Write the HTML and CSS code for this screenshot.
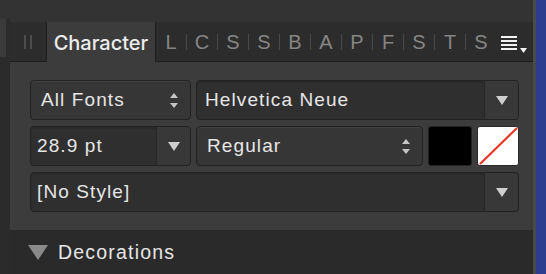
FILE: index.html
```html
<!DOCTYPE html>
<html>
	<head>
		<meta charset="utf-8" />
		<title>Character</title>
		<link rel="stylesheet" href="styles.css">
	</head>
	<body>
		<div class="window">
			<div class="left-strip">
				<div class="strip-top"></div>
				<div class="strip-grip"><span></span></div>
			</div>

			<div class="panel">
				<div class="header"></div>

				<div class="tabbar">
					<div class="grip"><span></span><span></span></div>
					<div class="tab active">Character</div>
					<div class="letters">
						<span class="letter">L</span>
						<span class="letter">C</span>
						<span class="letter">S</span>
						<span class="letter">S</span>
						<span class="letter">B</span>
						<span class="letter">A</span>
						<span class="letter">P</span>
						<span class="letter">F</span>
						<span class="letter">S</span>
						<span class="letter">T</span>
						<span class="letter">S</span>
					</div>
					<div class="menu">
						<svg width="28" height="20" viewBox="0 0 28 20">
							<rect x="0" y="2" width="16" height="2" fill="#f2f2f2" />
							<rect x="0" y="6" width="16" height="2" fill="#f2f2f2" />
							<rect x="0" y="10" width="16" height="2" fill="#f2f2f2" />
							<rect x="0" y="14" width="16" height="2" fill="#f2f2f2" />
							<polygon points="19,14 26,14 22.5,19" fill="#f2f2f2" />
						</svg>
					</div>
				</div>

				<div class="content">
					<div class="row">
						<div class="popup fonts">
							<span class="label">All Fonts</span>
							<span class="stepper"><i class="up"></i><i class="down"></i></span>
						</div>
						<div class="combo family">
							<span class="field">Helvetica Neue</span>
							<span class="drop"><i class="tri"></i></span>
						</div>
					</div>

					<div class="row">
						<div class="combo size">
							<span class="field">28.9 pt</span>
							<span class="drop"><i class="tri"></i></span>
						</div>
						<div class="popup weight">
							<span class="label">Regular</span>
							<span class="stepper"><i class="up"></i><i class="down"></i></span>
						</div>
						<div class="swatch fill"></div>
						<div class="swatch stroke">
							<svg width="40" height="38" viewBox="0 0 40 38" preserveAspectRatio="none">
								<line x1="2" y1="37" x2="39" y2="1" stroke="#e8352b" stroke-width="2.2" />
							</svg>
						</div>
					</div>

					<div class="row">
						<div class="combo style">
							<span class="field">[No Style]</span>
							<span class="drop"><i class="tri"></i></span>
						</div>
					</div>
				</div>

				<div class="section">
					<i class="disclosure"></i>
					<span>Decorations</span>
				</div>
			</div>

			<div class="edge"></div>
			<div class="desktop"></div>
		</div>
	</body>
</html>
```

FILE: styles.css
```css
body {
	margin: 0;
	padding: 0;
	background-color: #333333;
	font-family: "Liberation Sans", Arial, sans-serif;
	overflow: hidden;
}

.window {
	display: flex;
	width: 546px;
	height: 274px;
}

/* 左边的窄条 */
.left-strip {
	width: 10px;
	display: flex;
	flex-direction: column;
	background-color: #2b2b2b;
}

.strip-top {
	height: 19px;
	background-color: #333333;
}

.strip-grip {
	height: 38px;
	display: flex;
}

.strip-grip span {
	width: 6px;
	background-color: #3a3a3a;
}

.panel {
	width: 523px;
	display: flex;
	flex-direction: column;
}

.header {
	height: 22px;
	background-color: #333333;
}

/* 标签栏 */
.tabbar {
	height: 40px;
	display: flex;
	align-items: stretch;
	background-color: #2c2c2c;
}

.grip {
	width: 37px;
	display: flex;
	justify-content: center;
	align-items: center;
	gap: 4px;
	border-bottom: 1px solid #1d1d1d;
	border-right: 1px solid #1d1d1d;
	box-sizing: border-box;
}

.grip span {
	width: 2px;
	height: 14px;
	background-color: #4d4d4d;
}

.tab {
	width: 108px;
	background-color: #3c3c3c;
	color: #ececec;
	font-family: Inter, "Liberation Sans", sans-serif;
	font-weight: 500;
	font-size: 20px;
	line-height: 40px;
	text-align: center;
	padding-top: 1px;
	box-sizing: border-box;
}

.letters {
	display: flex;
	align-items: center;
	border-bottom: 1px solid #1d1d1d;
	border-left: 1px solid #1d1d1d;
	padding-top: 1px;
}

.letter {
	width: 30px;
	height: 16px;
	line-height: 16px;
	text-align: center;
	color: #858585;
	font-size: 20px;
}

.letter + .letter {
	border-left: 1px solid #4a4a4a;
}

.menu {
	flex: 1;
	display: flex;
	align-items: center;
	padding-left: 5px;
	padding-top: 4px;
	border-bottom: 1px solid #1d1d1d;
}

/* 主要内容 */
.content {
	flex: 1;
	background-color: #3c3c3c;
	padding: 18px 14px 18px 20px;
	display: flex;
	flex-direction: column;
	gap: 6px;
}

.row {
	display: flex;
	gap: 5px;
	height: 40px;
}

.popup,
.combo,
.swatch {
	box-sizing: border-box;
	border: 1px solid #222222;
	border-radius: 4px;
	color: #e6e6e6;
	font-size: 19px;
	letter-spacing: 1.1px;
}

.popup {
	display: flex;
	align-items: center;
	background-color: #363636;
	padding-left: 10px;
	padding-right: 12px;
	box-shadow: inset 0 1px 0 #404040;
}

.popup .label {
	flex: 1;
}

.fonts {
	width: 161px;
}

.weight {
	width: 227px;
}

.stepper {
	display: flex;
	flex-direction: column;
	gap: 5px;
}

.stepper i {
	width: 0;
	height: 0;
	border-left: 4px solid transparent;
	border-right: 4px solid transparent;
}

.stepper .up {
	border-bottom: 5px solid #c4c4c4;
}

.stepper .down {
	border-top: 5px solid #c4c4c4;
}

.combo {
	display: flex;
	background-color: #2f2f2f;
	overflow: hidden;
}

.combo .field {
	flex: 1;
	line-height: 38px;
	padding-left: 8px;
	box-shadow: inset 0 2px 0 #2a2a2a;
}

.combo .drop {
	width: 33px;
	display: flex;
	justify-content: center;
	align-items: center;
	background-color: #383838;
	border-left: 1px solid #262626;
}

.tri {
	width: 0;
	height: 0;
	border-left: 6px solid transparent;
	border-right: 6px solid transparent;
	border-top: 9px solid #cfcfcf;
}

.family {
	width: 323px;
}

.size {
	width: 161px;
}

.size .field {
	padding-left: 6px;
}

.style {
	width: 489px;
}

.style .field {
	padding-left: 6px;
}

.swatch {
	width: 44px;
	border-radius: 3px;
}

.fill {
	background-color: #000000;
}

.stroke {
	width: 42px;
	background-color: #ffffff;
	border-color: #2a2a2a;
	overflow: hidden;
}

.stroke svg {
	display: block;
	width: 100%;
	height: 100%;
}

/* 底部 Decorations */
.section {
	height: 44px;
	background-color: #2a2a2a;
	display: flex;
	align-items: center;
	padding-left: 18px;
	color: #e6e6e6;
	font-size: 19.5px;
	letter-spacing: 1.2px;
}

.disclosure {
	width: 0;
	height: 0;
	border-left: 10px solid transparent;
	border-right: 10px solid transparent;
	border-top: 15px solid #8a8a8a;
	margin-right: 10px;
}

.edge {
	width: 3px;
	background-color: #4a4a4a;
}

.desktop {
	width: 10px;
	background-color: #2c3c8f;
}
```
